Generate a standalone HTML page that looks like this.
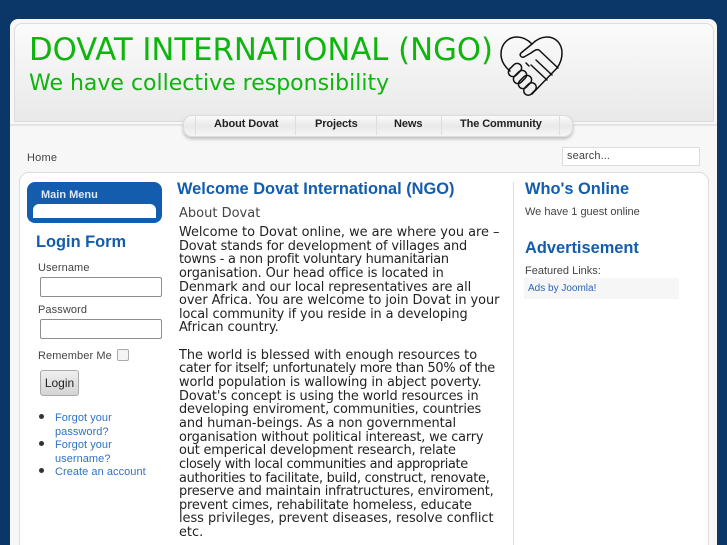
<!DOCTYPE html>
<html><head><meta charset="utf-8"><style>
html,body{margin:0;padding:0;overflow:hidden}
body{width:727px;height:545px;background:#0b3768;font-family:"Liberation Sans",sans-serif;color:#444}
#r{position:absolute;left:0;top:0;width:727px;height:545px;overflow:hidden;background:#0b3768}
#r div,#r svg{position:absolute;white-space:nowrap}
#r .blue{color:#135cae;font-weight:bold;font-size:16.4px;line-height:20px}
#r .body{font-family:"DejaVu Sans",sans-serif;font-size:12.9px;color:#222;left:179px;line-height:13.65px}
#r .body span{display:block;height:13.65px}
#r .lbl{font-size:11px;letter-spacing:.1px;color:#444;line-height:14px}
#r .field{left:40px;width:120px;height:18px;background:#fff;border:1px solid #8e8e8e;border-radius:2px}
#r .link{color:#2f72c4;font-size:11px;line-height:14px;letter-spacing:.05px;left:55px}
#r .dot{left:39px;width:5px;height:5px;background:#333;border-radius:50%}
#r .m{top:117px;font-size:11px;font-weight:bold;color:#222;line-height:14px;letter-spacing:-.1px}
#r .sep{top:115px;width:1px;height:20px;background:#ddd}
</style></head><body><div id="r">
<div style="left:10px;top:19px;width:707px;height:526px;background:#f7f7f7;border-radius:8px 8px 0 0"></div>
<div style="left:14px;top:23px;width:698px;height:97px;background:linear-gradient(#fbfbfb,#e9e9e9);border:1px solid #dcdcdc;border-radius:8px 8px 0 0"></div>
<div style="left:10px;top:124px;width:707px;height:2px;background:#e4e4e4"></div>
<div style="left:29px;top:32px;font-family:'DejaVu Sans',sans-serif;font-size:30.7px;line-height:38px;color:#0db50d">DOVAT INTERNATIONAL (NGO)</div>
<div style="left:29px;top:70px;font-family:'DejaVu Sans',sans-serif;font-size:22px;line-height:28px;color:#0db50d">We have collective responsibility</div>
<svg style="left:0;top:0" width="727" height="120" viewBox="0 0 727 120" fill="none" stroke="#111" stroke-width="1.5" stroke-linejoin="round" stroke-linecap="round">
<path d="M510 71C504 66 501 60 501 54C501 44 508 37 517 37C523 37 528 40 532 44C536 40 541 37 547 37C556 37 562 44 562 53C562 59 560 64 557 68"/>
<path d="M557 68L532 94"/>
<path d="M532 44L521 53C519 55 521 58 524 57L531 53C535 50 537 49 539 50L558 68"/>
<path d="M536 60L552 75M531 65L547 80M529 66L526 63"/>
<rect x="507.500" y="65.500" width="15" height="9" rx="4.500" transform="rotate(-45 515 70)"/>
<rect x="512.500" y="72.500" width="15" height="9" rx="4.500" transform="rotate(-45 520 77)"/>
<rect x="517.500" y="77.500" width="15" height="9" rx="4.500" transform="rotate(-45 525 82)"/>
<rect x="523" y="84.500" width="14" height="9" rx="4.500" transform="rotate(-45 530 89)"/>
</svg>
<div style="left:183px;top:115px;width:388px;height:20px;background:linear-gradient(#fafafa,#e9e9e9 50%,#f6f6f6);border:1px solid #ddd;border-radius:9px;box-shadow:0 2px 3px #bbb"></div>
<div class="sep" style="left:195px"></div><div class="sep" style="left:295px"></div><div class="sep" style="left:376px"></div><div class="sep" style="left:441px"></div><div class="sep" style="left:559px"></div>
<div class="m" style="left:214px">About Dovat</div>
<div class="m" style="left:315px">Projects</div>
<div class="m" style="left:394px">News</div>
<div class="m" style="left:460px">The Community</div>
<div style="left:27px;top:151px;font-size:11px;line-height:14px;letter-spacing:.2px;color:#444">Home</div>
<div style="left:562px;top:147px;width:132px;height:17px;background:#fff;border:1px solid #ddd;padding-left:4px;font-size:11px;line-height:17px;letter-spacing:.1px;color:#444">search...</div>
<div style="left:19px;top:172px;width:688px;height:380px;background:#fff;border:1px solid #ddd;border-radius:10px 10px 0 0"></div>
<div style="left:27px;top:182px;width:135px;height:41px;background:#135cae;border-radius:8px"></div>
<div style="left:33px;top:204px;width:123px;height:14px;background:#fff;border-radius:6px 6px 0 0"></div>
<div style="left:41px;top:188px;font-size:11px;font-weight:bold;line-height:14px;color:#dfe9f5">Main Menu</div>
<div class="blue" style="left:36px;top:232px">Login Form</div>
<div class="lbl" style="left:38px;top:261px">Username</div>
<div class="field" style="top:277px"></div>
<div class="lbl" style="left:38px;top:303px">Password</div>
<div class="field" style="top:319px"></div>
<div class="lbl" style="left:38px;top:349px">Remember Me</div>
<div style="left:117px;top:349px;width:10px;height:10px;background:#f4f4f4;border:1px solid #aaa;border-radius:2px"></div>
<div style="left:40px;top:370px;width:37px;height:24px;background:linear-gradient(#efefef,#d4d4d4);border:1px solid #aaa;border-radius:3px;text-align:center;font-size:12px;line-height:25px;color:#222">Login</div>
<div class="dot" style="top:414px"></div><div class="dot" style="top:441px"></div><div class="dot" style="top:468px"></div>
<div class="link" style="top:411px">Forgot your</div>
<div class="link" style="top:425px">password?</div>
<div class="link" style="top:438px">Forgot your</div>
<div class="link" style="top:452px">username?</div>
<div class="link" style="top:465px">Create an account</div>
<div class="blue" style="left:177px;top:179px">Welcome Dovat International (NGO)</div>
<div style="left:179px;top:205px;font-family:'DejaVu Sans',sans-serif;font-size:13px;line-height:17px;color:#444">About Dovat</div>
<div class="body" style="top:226px">
<span>Welcome to Dovat online, we are where you are –</span>
<span style="letter-spacing:-.14px">Dovat stands for development of villages and</span>
<span style="letter-spacing:-.28px">towns - a non profit voluntary humanitarian</span>
<span style="letter-spacing:-.12px">organisation. Our head office is located in</span>
<span style="letter-spacing:-.09px">Denmark and our local representatives are all</span>
<span style="letter-spacing:-.04px">over Africa. You are welcome to join Dovat in your</span>
<span style="letter-spacing:-.11px">local community if you reside in a developing</span>
<span style="letter-spacing:-.06px">African country.</span>
<span></span>
<span style="letter-spacing:-.02px">The world is blessed with enough resources to</span>
<span style="letter-spacing:-.31px">cater for itself; unfortunately more than 50% of the</span>
<span style="letter-spacing:-.08px">world population is wallowing in abject poverty.</span>
<span style="letter-spacing:-.11px">Dovat's concept is using the world resources in</span>
<span style="letter-spacing:-.15px">developing enviroment, communities, countries</span>
<span style="letter-spacing:-.05px">and human-beings. As a non governmental</span>
<span style="letter-spacing:-.16px">organisation without political intereast, we carry</span>
<span style="letter-spacing:-.17px">out emperical development research, relate</span>
<span style="letter-spacing:-.35px">closely with local communities and appropriate</span>
<span style="letter-spacing:-.27px">authorities to facilitate, build, construct, renovate,</span>
<span style="letter-spacing:-.2px">preserve and maintain infratructures, enviroment,</span>
<span style="letter-spacing:-.16px">prevent cimes, rehabilitate homeless, educate</span>
<span style="letter-spacing:-.02px">less privileges, prevent diseases, resolve conflict</span>
<span>etc.</span>
</div>
<div style="left:513px;top:182px;width:1px;height:363px;background:#ddd"></div>
<div class="blue" style="left:525px;top:179px">Who's Online</div>
<div class="lbl" style="left:525px;top:205px;letter-spacing:0">We have 1 guest online</div>
<div class="blue" style="left:525px;top:238px">Advertisement</div>
<div class="lbl" style="left:525px;top:264px;letter-spacing:0">Featured Links:</div>
<div style="left:524px;top:278px;width:155px;height:21px;background:#f6f6f6"></div>
<div style="left:528px;top:282px;font-size:10px;line-height:14px;color:#2a65b5">Ads by Joomla!</div>
</div></body></html>
